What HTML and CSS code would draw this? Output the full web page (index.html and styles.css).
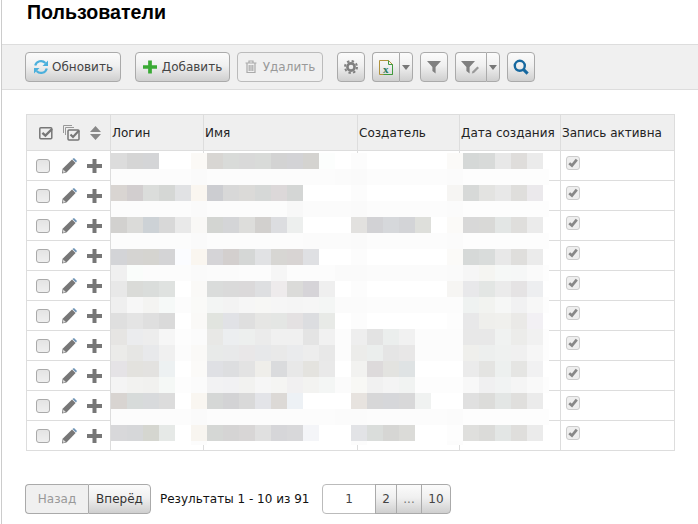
FILE: index.html
```html
<!DOCTYPE html>
<html lang="ru">
<head>
    <meta charset="UTF-8">
    <title>Пользователи</title>
    <link rel="stylesheet" href="styles.css">
</head>
<body>

    <svg class="sprite" width="0" height="0">
        <symbol id="i-pencil" viewBox="0 0 16 16">
            <path fill="#777" d="M11 1.400 14.600 5 5.400 14.400 1 15.600 1.600 10.800z"/>
            <path fill="#6d93b5" d="M11.400 1 13 0 16 3 15 4.600z"/>
            <path fill="#ddd" d="M2.200 11.400 4.800 14 2 14.800z"/>
        </symbol>
        <symbol id="i-plus" viewBox="0 0 15 14">
            <path d="M5.500 0h4v5H15v4H9.500v5h-4V9H0V5h5.500z"/>
        </symbol>
        <symbol id="i-check" viewBox="0 0 14 14">
            <path fill="none" stroke="#888" stroke-width="3.200" d="M2.600 7.200 5.800 10 11.400 3"/>
        </symbol>
    </svg>

    <div class="page">
        <h1 class="title">Пользователи</h1>

        <div class="toolbar">
            <button class="btn btn-refresh">
                <svg width="16" height="16" viewBox="0 0 16 16"><path fill="none" stroke="#4cb0dc" stroke-width="2.200" d="M2.200 6.600A6 6 0 0 1 12.400 4M13.800 9.400A6 6 0 0 1 3.600 12"/><path fill="#4cb0dc" d="M15 1.500v5.500H9.500zM1 14.500V9h5.500z"/></svg>
                Обновить
            </button>
            <button class="btn btn-add">
                <svg width="14" height="14" viewBox="0 0 15 14"><path fill="#3aaa35" d="M5.500 0h4v5H15v4H9.500v5h-4V9H0V5h5.500z"/></svg>
                Добавить
            </button>
            <button class="btn btn-delete" disabled>
                <svg width="12" height="14" viewBox="0 0 12 14"><path fill="none" stroke="#aaa" stroke-width="1.200" d="M.5 3h11M2 3v9.500h8V3M4 3V1h4v2M4.200 5v6M6 5v6M7.800 5v6"/></svg>
                Удалить
            </button>

            <button class="btn btn-icon btn-gear">
                <svg width="14" height="14" viewBox="0 0 14 14"><circle cx="7" cy="7" r="6" fill="none" stroke="#808080" stroke-width="2" stroke-dasharray="2.400 2.300"/><circle cx="7" cy="7" r="3.600" fill="none" stroke="#808080" stroke-width="2.600"/></svg>
            </button>
            <div class="split split-excel">
                <button class="btn btn-main">
                    <svg width="14" height="15" viewBox="0 0 14 15"><path fill="none" stroke="#b0923c" d="M.5.5h9l4 4v10H.5z"/><path fill="none" stroke="#3f9a3f" d="M9.500.5v4h4v10h-9"/><text class="excel-x" x="4" y="12.500">x</text></svg>
                </button>
                <button class="btn btn-caret"><span class="caret"></span></button>
            </div>
            <button class="btn btn-icon btn-filter">
                <svg width="14" height="14" viewBox="0 0 14 14"><path fill="#808080" d="M0 1h14L8.600 7v6.500L5.400 11V7z"/></svg>
            </button>
            <div class="split split-filter">
                <button class="btn btn-main">
                    <svg width="20" height="14" viewBox="0 0 20 14"><path fill="#808080" d="M0 1h14L8.600 7v6.500L5.400 11V7z"/><path fill="#999" d="M16.400 6.400 18 8l-5 5-2.200.6.6-2.200z"/></svg>
                </button>
                <button class="btn btn-caret"><span class="caret"></span></button>
            </div>
            <button class="btn btn-icon btn-search">
                <svg width="16" height="16" viewBox="0 0 16 16"><circle cx="6.800" cy="6.800" r="5" fill="none" stroke="#16689f" stroke-width="2.400"/><path stroke="#16689f" stroke-width="3" d="m10.600 10.600 4 4"/></svg>
            </button>
        </div>

        <div class="table-wrap">
            <table class="users">
                <colgroup>
                    <col class="col-actions"><col class="col-login"><col class="col-name">
                    <col class="col-creator"><col class="col-date"><col class="col-active">
                </colgroup>
                <thead>
                    <tr>
                        <th class="actions-head">
                            <svg width="15" height="14" viewBox="0 0 15 14"><rect x=".8" y="1.800" width="12" height="11" rx="1" fill="none" stroke="#777" stroke-width="1.500"/><path fill="none" stroke="#777" stroke-width="2.400" d="M3.400 6.800 6.400 9.600 13 3"/></svg>
                            <svg width="18" height="16" viewBox="0 0 18 16"><path fill="none" stroke="#999" d="M.5 8V.5H9M2.500 10V2.500H11"/><rect x="5" y="5" width="11" height="10" rx="1" fill="none" stroke="#777" stroke-width="1.500"/><path fill="none" stroke="#777" stroke-width="2.200" d="M7.500 9.500 10 12l6-6.500"/></svg>
                            <svg width="11" height="14" viewBox="0 0 11 14"><path fill="#888" d="M5.500 0 11 6H0zM0 8h11l-5.500 6z"/></svg>
                        </th>
                        <th>Логин</th>
                        <th>Имя</th>
                        <th>Создатель</th>
                        <th>Дата создания</th>
                        <th>Запись активна</th>
                    </tr>
                </thead>
                <tbody id="rows"></tbody>
            </table>
            <div class="mosaic" id="mosaic"></div>
        </div>

        <div class="pager">
            <div class="pager-nav">
                <button class="btn page-prev" disabled>Назад</button>
                <button class="btn page-next">Вперёд</button>
            </div>
            <span class="pager-info">Результаты 1 - 10 из 91</span>
            <div class="pager-pages">
                <button class="btn page-num page-current">1</button>
                <button class="btn page-num page-2">2</button>
                <button class="btn page-num page-gap">...</button>
                <button class="btn page-num page-last">10</button>
            </div>
        </div>
    </div>

    <script src="script.js"></script>
</body>
</html>
```
FILE: styles.css
```css
/* Page */
body {
    margin: 0;
    font-family: "DejaVu Sans", sans-serif;
    font-size: 12px;
    color: #222;
    background: #fff;
}

.sprite {
    position: absolute;
}

.page {
    height: 524px;
    box-sizing: border-box;
    margin-left: 1px;
    border-left: 1px solid #ccc;
    overflow: hidden;
}

.title {
    height: 44px;
    margin: 0;
    padding: 0 0 0 25px;
    box-sizing: border-box;
    font-family: "Liberation Sans", Arial, sans-serif;
    font-size: 19.6px;
    line-height: 24px;
    font-weight: bold;
    color: #000;
}

/* Toolbar */
.toolbar {
    display: flex;
    align-items: center;
    height: 46px;
    box-sizing: border-box;
    padding-left: 23px;
    gap: 7px;
    background: #f0f0f0;
    border-top: 1px solid #ddd;
    border-bottom: 1px solid #ddd;
}

.btn {
    display: flex;
    align-items: center;
    justify-content: center;
    height: 30px;
    padding: 0;
    box-sizing: border-box;
    font-family: inherit;
    font-size: 12px;
    color: #444;
    background: linear-gradient(#fbfbfb, #f0f0f0 45%, #cfcfcf);
    border: 1px solid #aaa;
    border-radius: 4px;
}

.btn:disabled {
    color: #999;
    background: #f0f0f0;
    border-color: #bbb;
}

.btn-refresh {
    width: 96px;
    gap: 3px;
}

.btn-add {
    width: 95px;
    gap: 5px;
    margin-left: 7px;
}

.btn-delete {
    width: 86px;
    gap: 6px;
}

.btn-gear {
    margin-left: 7px;
}

.btn-icon {
    width: 28px;
}

.split {
    display: flex;
}

.split .btn-main {
    border-radius: 4px 0 0 4px;
    border-right: 0;
}

.split .btn-caret {
    width: 14px;
    border-radius: 0 4px 4px 0;
    border-left: 1px solid #aaa;
}

.split-excel .btn-main {
    width: 27px;
}

.split-filter .btn-main {
    width: 31px;
}

.excel-x {
    font-family: "Liberation Serif", serif;
    font-size: 11px;
    font-weight: bold;
    fill: #2a7a5a;
}

.caret {
    width: 0;
    height: 0;
    border-left: 4px solid transparent;
    border-right: 4px solid transparent;
    border-top: 5px solid #777;
}

/* Table */
.table-wrap {
    position: relative;
    width: 648px;
    margin: 24px 0 0 24px;
}

.users {
    width: 648px;
    table-layout: fixed;
    border-collapse: collapse;
}

.col-actions { width: 84px; }
.col-login { width: 93px; }
.col-name { width: 154px; }
.col-creator { width: 102px; }
.col-date { width: 101px; }
.col-active { width: 114px; }

.users th,
.users td {
    height: 30px;
    padding: 0;
    box-sizing: border-box;
    border: 1px solid #ddd;
}

.users th {
    height: 36px;
    padding-left: 1px;
    font-weight: normal;
    text-align: left;
    white-space: nowrap;
    background: #efefef;
}

.users .actions-head {
    padding-left: 12px;
}

.actions-head svg {
    vertical-align: middle;
    margin-right: 5px;
}

.users .row-actions {
    padding-left: 9px;
}

.row-tools {
    display: flex;
    align-items: center;
}

.box {
    display: block;
    width: 14px;
    height: 14px;
    box-sizing: border-box;
    background: linear-gradient(#e4e4e4, #efefef);
    border: 1px solid #aaa;
    border-radius: 3px;
}

.pencil {
    width: 16px;
    height: 16px;
    margin-left: 11px;
}

.plus {
    width: 15px;
    height: 14px;
    margin-left: 10px;
    fill: #777;
}

.box-on {
    margin: -6px 0 0 5px;
    background: #eee;
    border-color: #ccc;
}

.box-on svg {
    display: block;
    width: 12px;
    height: 12px;
}

/* Blurred-out cell values, drawn over the table */
.mosaic {
    position: absolute;
    left: 85px;
    top: 39px;
    display: grid;
    grid-template-columns: repeat(27, 16px) 6px;
    grid-template-rows: repeat(18, 16px) 4px;
}

/* Pager */
.pager {
    display: flex;
    align-items: center;
    margin: 33px 0 0 23px;
}

.pager-nav {
    display: flex;
}

.pager-nav .btn {
    width: 63px;
    height: 30px;
    color: #333;
}

.pager-nav .page-prev {
    border-radius: 4px 0 0 4px;
    color: #999;
    background: #f0f0f0;
    border-color: #aaa;
    border-right: 0;
}

.pager-nav .page-next {
    border-radius: 0 4px 4px 0;
}

.pager-info {
    width: 151px;
    margin-left: 9px;
    color: #111;
    white-space: nowrap;
}

.pager-pages {
    display: flex;
    margin-left: 11px;
}

.page-num {
    border-radius: 0;
    margin-left: -1px;
}

.page-current {
    width: 54px;
    margin-left: 0;
    background: #fff;
    border-radius: 4px 0 0 4px;
    border-color: #bbb;
}

.page-2 { width: 22px; }
.page-gap { width: 26px; color: #777; }
.page-last { width: 30px; border-radius: 0 4px 4px 0; }
```
FILE: script.js
```js
// Blurred cell values, one string per 16px row of the mosaic
const blocks = [
    'dcdcdc d5d5d5 d4d5d7 fff fff fbf9f6 d8d6d3 d9dbd9 d9d9d9 d9dbd9 d3d3d3 d3d3d6 d4d3d0 fcfefd fff fcfcfc fff fff fff fff fff fbfaf8 d5d8d7 d8dad9 e8e8e8 dfdddb ebebeb fff',
    'fcfcfc fcfcfc fcfcfc fcfcfc fcfcfc fafafa fcfcfc fcfcfc fcfcfc fcfcfc fcfcfc fcfcfc fcfcfc fcfcfc fbfbfb fafafa fcfcfc fcfcfc fcfcfc fcfcfc fcfcfc fbfbfb fdfdfd fdfdfd fdfdfd fdfdfd fdfdfd fdfdfd',
    'd9d5d2 d2cecf dbdddb d5d7d5 e1e2e4 faf6f0 cccdd1 d8d8d8 dbdad8 d6d8d7 dcd8d9 d4d6d5 fff fff fff fcfcfc fff fff fff fff fff f6f5f3 d7d9d8 e3e3e1 e8e8e8 dfdedc ebe9ec fff',
    'fcfcfc fcfcfc fcfcfc fcfcfc fcfcfc fafafa fcfcfc fcfcfc fcfcfc fcfcfc fcfcfc f8f8f8 fbfbfb fbfbfb fbfbfb fafafa fcfcfc fcfcfc fcfcfc fcfcfc fcfcfc fbfbfb fdfdfd fdfdfd fdfdfd fdfdfd fdfdfd fdfdfd',
    'd2d1cf dbdbd9 cdd2d6 d8d8d8 e9e9e9 f9f8f6 d3d5d2 d4d5d7 dddddb d2d0ce dcdde0 edefee fff fff fff e2e1df d2d2d5 d6d8db d3d4d7 dedfdb fff fbfaf8 d8d8d8 d9d9d7 e3e6e5 dfdedc ebebeb fff',
    'fcfcfc fcfcfc fcfcfc fcfcfc fcfcfc fafafa fcfcfc fcfcfc fcfcfc fcfcfc fcfcfc fcfcfc fbfbfb fbfbfb fbfbfb fafafa fcfcfc fcfcfc fcfcfc fcfcfc fcfcfc fbfbfb fdfdfd fdfdfd fdfdfd fdfdfd fdfdfd fdfdfd',
    'd3d4d7 d5d4d2 d5d4d0 d4d4d6 fbfcff faf6f0 d5d4d7 d3cfce d5d7d6 e1e2e4 d7d6d3 d8d4d3 dfe0e3 fff fff fcfcfc fff fff fff fff fff fbfaf8 d6d9d8 d9dcdb e8e8e8 dfdedc ebebeb fff',
    'f0f0f0 fafdfb fcfcfc fcfcfc fcfcfc fafafa fbfbfb fbfbfb fcfcfc fcfcfc f6f6f6 fcfcfc fcfcfc fcfcfc fafafa fafafa fbfbfb fbfbfb fbfbfb fbfbfb fbfbfb fafafa f6f6f6 f5f5f2 f6f8f7 f6f7f7 fafafa fdfdfd',
    'e8e8e8 dadbd8 dadddb dfe2e0 fff faf9f7 dadcdb dadada dbd9da dedfe1 eeebec dbdbd9 d6d4d8 efefef fff fcfcfc fff fff fff fff fff f6f5f3 e8e8ea e3e6e4 ebebeb e5e3e4 edeef0 fff',
    'efefef f7f7f7 f4f4f2 f6f9f8 fcfcfc fafaf8 f3f5f4 f3f3f3 f6f6f6 f7f7f5 f6f6f6 f5f5f5 f6f6f6 f4f6f5 fbfbfb fbfbfb fcfcfc fcfcfc fcfcfc fcfcfc fcfcfc fcfcfc eff2f1 f2f3f0 f6f7f6 f1f1f2 f7f7f7 fdfdfd',
    'dfdfdf e4e4e4 dfdfdf dadada fff faf9f7 e1e4df e1e2e6 dfdfdf e6e6e4 e4e6e4 e4e1e2 dcdde0 e8eae7 fff fcfcfc fff fff fff fff fff fdfdfd e8e8e9 efefec f0f0ed eae9e7 f2f0f4 fff',
    'e6e5e3 ebecee ededed f6f6f6 fdfdfd fbfbfb e8e8e6 eceef0 edefee ebebeb f0f0f0 f0f0f0 e4e4e4 f1f1f1 fcfcfc eeeeee e3e3e3 ebeeed f1f1f1 fcfcfc fcfcfc fcfcfc e8e8e8 e8e8e8 f0f2f1 ececea f1f1f1 fdfdfd',
    'ebebe9 e6e6e4 e8e9eb f0f0f0 fcfcfc faf9f7 e8eae9 e8e9ea e9e7e8 e7e8ea e9e9e9 eaebed ededed e8e8e8 fcfcfc ececea ebeeed e5e5e5 e8e7e7 fcfcfc fcfcfc fcfcfc efefec edefee eff1f0 f0f0f0 f6f6f6 fdfdfd',
    'e5e3e6 e3e2de e3e2e0 edf1f2 fff fbfaf8 dfe0e4 dddee0 e3e3e3 efeeea dadbdd e8e8e8 e4e3df e9e9e9 fff f2f2f0 dddadb e3e3e0 dfe3e4 fff fff fff ebebeb e4e4e2 edf0ef e5e5e3 f1f1f2 fff',
    'f4f4f4 f2f2f0 f1f1ef f5f8f6 fdfdfd fbfbfb f2f2f3 f1f1f3 f2f2f0 f6f6f6 f5f5f3 f1f0f1 f3f3f1 f4f6f5 fbfbfb f8f8f5 f1f1f1 f4f4f4 f1f3f2 fdfdfd fdfdfd fdfdfd f8f8f8 f0f0f1 f1f3f3 f5f5f5 f9f9f9 fdfdfd',
    'd8d4d1 d7dbda d8dadc dcdcdc fff f9f6f1 d5d7d6 d3d3d5 d9d9d9 e3e4e8 dcd9d6 edf1f5 fff fff fff e7e3df d7d7d8 d6d7da d8d8d9 f0f2f1 fff fff e0e0e0 dcdcda e3e6e5 e0dfdd ebebeb fff',
    'fcfcfc fcfcfc fcfcfc fcfcfc fcfcfc fafafa fcfcfc fcfcfc fcfcfc fcfcfc fcfcfc fcfcfc fcfcfc fcfcfc fbfbfb fbfbfb fcfcfc fcfcfc fcfcfc fcfcfc fcfcfc fbfbfb fdfdfd fdfdfd fdfdfd fdfdfd fdfdfd fdfdfd',
    'd8d8da d6d7d9 d5d6d0 e6e9e7 fff f8f5f0 d5d7d5 d5d4d4 d8d6d6 e0e0e0 d6d6d9 d8d8da f4f5f8 fff fff e2e3e6 dadddb d6d6d4 dbdbd8 fff fff fdfdfd dfdfdd dbdbd9 e3e6e5 dfdedc ebebeb fff',
    'fff fff fff fff fff fcfcfc fff fff fff fff fff fff fff fff fff fcfcfc fff fff fff fff fff fcfcfc fff fff fff fff fff fff'
];

const mosaic = document.getElementById('mosaic');
blocks.forEach(row => {
    row.split(' ').forEach(color => {
        const cell = document.createElement('div');
        cell.style.background = '#' + color;
        mosaic.appendChild(cell);
    });
});

// Ten user rows, the values themselves are hidden by the mosaic
const rowHtml = `
    <td class="row-actions">
        <div class="row-tools">
            <span class="box"></span>
            <svg class="pencil"><use href="#i-pencil"/></svg>
            <svg class="plus"><use href="#i-plus"/></svg>
        </div>
    </td>
    <td></td><td></td><td></td><td></td>
    <td><span class="box box-on"><svg><use href="#i-check"/></svg></span></td>`;

const rows = document.getElementById('rows');
for (let i = 0; i < 10; i++) {
    const tr = document.createElement('tr');
    tr.innerHTML = rowHtml;
    rows.appendChild(tr);
}
```
